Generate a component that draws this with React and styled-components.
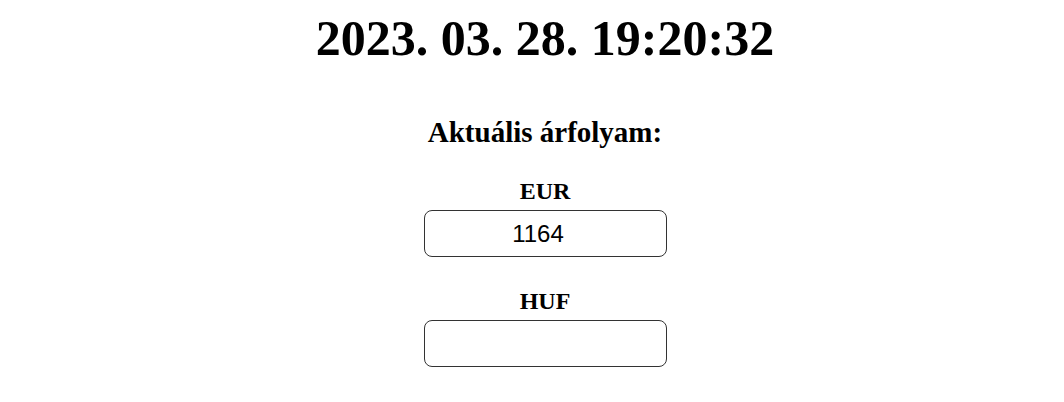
import React from "react";
import styled, { createGlobalStyle } from "styled-components";

const Global = createGlobalStyle`
  html, body { margin: 0; padding: 0; background: #fff; }
  body { font-family: "Liberation Serif", "Times New Roman", serif; color: #000; }
`;

const Page = styled.main`
  display: flex;
  flex-direction: column;
  align-items: center;
  padding: 9px 0 0 26px;
`;

const Clock = styled.h1`
  margin: 0;
  font-size: 50px;
  font-weight: 700;
  line-height: 58px;
`;

const Heading = styled.h2`
  margin: 48px 0 0;
  font-size: 29px;
  font-weight: 700;
  line-height: 34px;
`;

const Field = styled.div`
  display: flex;
  flex-direction: column;
  align-items: center;
  margin-top: ${(p) => p.$top}px;
`;

const Label = styled.label`
  font-size: 24px;
  font-weight: 700;
  line-height: 28px;
  margin-bottom: 5px;
`;

const Input = styled.input`
  box-sizing: border-box;
  width: 243px;
  height: 47px;
  border: 1px solid #333;
  border-radius: 8px;
  text-align: center;
  font-family: "Liberation Sans", Arial, sans-serif;
  font-size: 24px;
  color: #000;
  background: #fff;
  outline: none;
  padding: 0 16px 0 2px;
`;

export default function App() {
  return (
    <>
      <Global />
      <Page>
        <Clock>2023. 03. 28. 19:20:32</Clock>
        <Heading>Aktuális árfolyam:</Heading>
        <Field $top={28}>
          <Label>EUR</Label>
          <Input defaultValue="1164" />
        </Field>
        <Field $top={30}>
          <Label>HUF</Label>
          <Input defaultValue="" />
        </Field>
      </Page>
    </>
  );
}
